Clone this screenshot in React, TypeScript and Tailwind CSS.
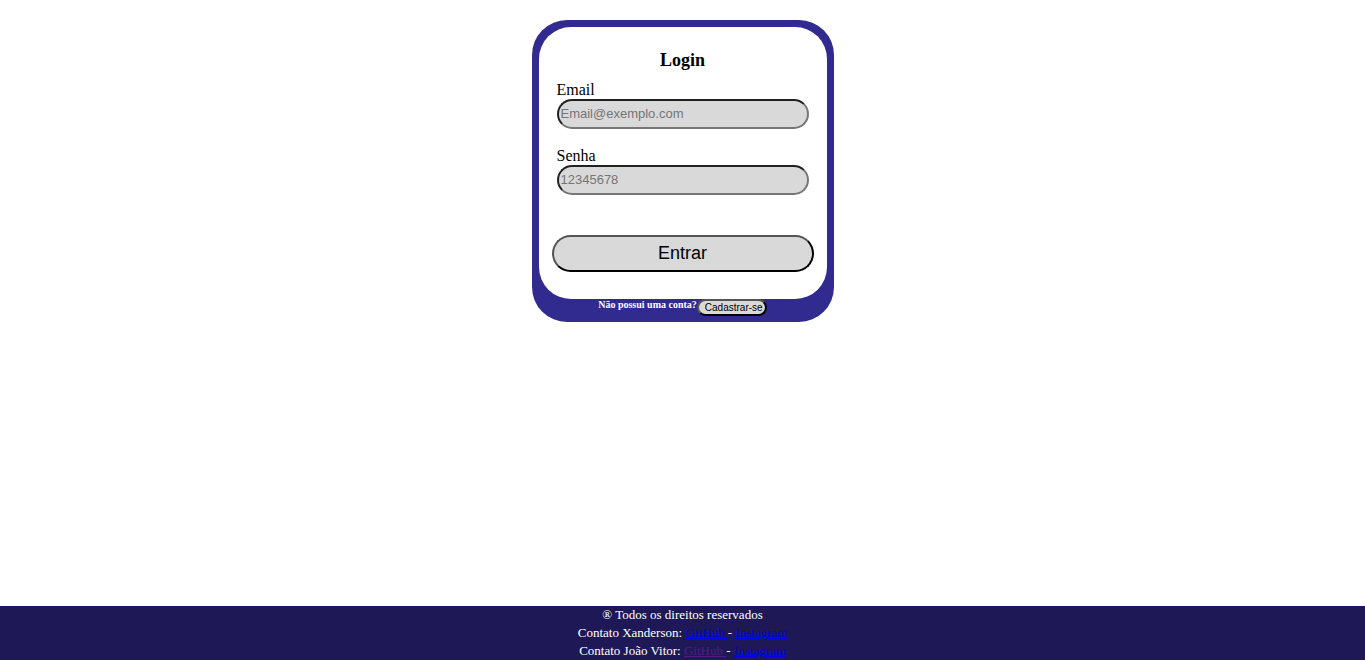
import React from "react";

type FieldProps = {
  id: string;
  label: string;
  type: string;
  placeholder: string;
};

function Field({ id, label, type, placeholder }: FieldProps) {
  return (
    <div className="flex flex-col">
      <label htmlFor={id} className="text-base leading-[18px]">
        {label}
      </label>
      <input
        id={id}
        type={type}
        placeholder={placeholder}
        className="h-[30px] w-full rounded-[15px] border-2 border-[#767676] bg-[#d9d9d9] px-[2px] pb-[2px] font-['Liberation_Sans',Arial,sans-serif] text-[13px] text-black [border-style:inset] placeholder:text-[#757575]"
      />
    </div>
  );
}

type ContactProps = {
  name: string;
  githubClass: string;
};

function Contact({ name, githubClass }: ContactProps) {
  return (
    <p>
      Contato {name}:{" "}
      <a href="#github" className={`whitespace-pre underline ${githubClass}`}>
        {"GitHub "}
      </a>
      -{" "}
      <a href="#instagram" className="text-[#0000ee] underline">
        Instagram
      </a>
    </p>
  );
}

export default function App() {
  return (
    <div className="flex min-h-screen flex-col bg-white font-['Liberation_Serif','Times_New_Roman',serif] text-black">
      <main className="flex grow justify-center pt-5 pb-5">
        <section className="flex w-[302px] flex-col self-start rounded-[35px] bg-[#312a8f] px-[7px] pt-[7px] pb-[6px]">
          <form
            className="flex flex-col rounded-[32px] bg-white px-[13px] pt-[22px] pb-[27px]"
            onSubmit={(event) => event.preventDefault()}
          >
            <h1 className="text-center text-lg leading-[22px] font-bold">Login</h1>
            <div className="mt-[10px] flex flex-col gap-[18px] px-[5px]">
              <Field id="email" label="Email" type="email" placeholder="Email@exemplo.com" />
              <Field id="senha" label="Senha" type="password" placeholder="12345678" />
            </div>
            <button
              type="submit"
              className="mt-10 h-[37px] rounded-[20px] border-2 border-black bg-[#d9d9d9] pb-[2px] font-['Liberation_Sans',Arial,sans-serif] text-lg leading-5 [border-style:outset]"
            >
              Entrar
            </button>
          </form>
          <div className="flex items-start justify-center">
            <p className="text-[10px] leading-3 font-bold text-white">Não possui uma conta?</p>
            <button
              type="button"
              className="h-[17px] w-[70px] rounded-[10px] border-2 border-black bg-[#d9d9d9] pl-[6px] text-left font-['Liberation_Sans',Arial,sans-serif] text-[10px] leading-3 whitespace-nowrap [border-style:outset]"
            >
              Cadastrar-se
            </button>
          </div>
        </section>
      </main>
      <footer className="bg-[#1e1956] text-center text-[13px] leading-[18px] text-white">
        <p>® Todos os direitos reservados</p>
        <Contact name="Xanderson" githubClass="text-[#0000ee]" />
        <Contact name="João Vitor" githubClass="text-[#551a8b]" />
      </footer>
    </div>
  );
}
